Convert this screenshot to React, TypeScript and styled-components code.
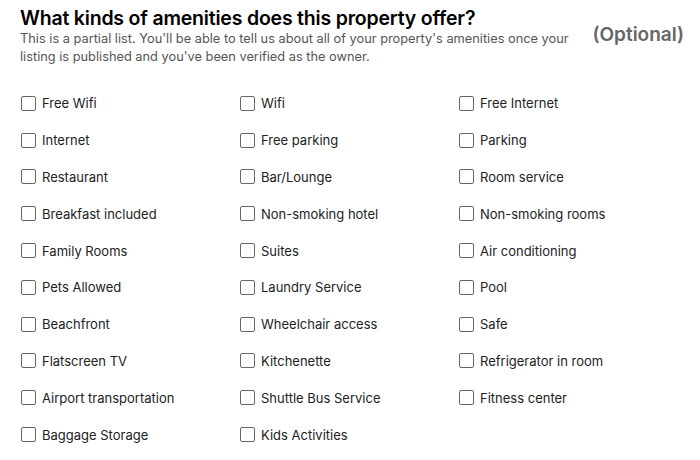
import { createGlobalStyle, styled } from 'styled-components';

const AMENITIES = [
  'Free Wifi',
  'Wifi',
  'Free Internet',
  'Internet',
  'Free parking',
  'Parking',
  'Restaurant',
  'Bar/Lounge',
  'Room service',
  'Breakfast included',
  'Non-smoking hotel',
  'Non-smoking rooms',
  'Family Rooms',
  'Suites',
  'Air conditioning',
  'Pets Allowed',
  'Laundry Service',
  'Pool',
  'Beachfront',
  'Wheelchair access',
  'Safe',
  'Flatscreen TV',
  'Kitchenette',
  'Refrigerator in room',
  'Airport transportation',
  'Shuttle Bus Service',
  'Fitness center',
  'Baggage Storage',
  'Kids Activities',
];

const App = () => {
  return (
    <>
      <GlobalStyle />
      <Wrapper>
        <Header>
          <HeaderText>
            <Title>What kinds of amenities does this property offer?</Title>
            <Description>
              This is a partial list. You'll be able to tell us about all of
              your property's amenities once your listing is published and
              you've been verified as the owner.
            </Description>
          </HeaderText>
          <Optional>(Optional)</Optional>
        </Header>
        <Grid>
          {AMENITIES.map((name) => (
            <Option key={name}>
              <Box type="checkbox" />
              <span>{name}</span>
            </Option>
          ))}
        </Grid>
      </Wrapper>
    </>
  );
};

export default App;

const GlobalStyle = createGlobalStyle`
  body {
    margin: 0;
    background: #fff;
    font-family: Inter, 'Noto Sans', sans-serif;
    color: #000;
  }
`;

const Wrapper = styled.section`
  width: 700px;
  padding: 6px 0 0 20px;
  box-sizing: border-box;
`;

const Header = styled.header`
  display: flex;
  align-items: flex-start;
  justify-content: space-between;
  padding-right: 16px;
`;

const HeaderText = styled.div`
  width: 564px;
`;

const Title = styled.h2`
  margin: 0;
  font-size: 19.5px;
  font-weight: 600;
  line-height: 24px;
  letter-spacing: -0.01em;
`;

const Description = styled.p`
  margin: 0;
  font-size: 12.8px;
  line-height: 18px;
  color: #555;
`;

const Optional = styled.span`
  margin-top: 17px;
  font-size: 19px;
  font-weight: 600;
  color: #666;
`;

const Grid = styled.div`
  display: grid;
  grid-template-columns: repeat(3, 219px);
  grid-auto-rows: 36.8px;
  margin-top: 19px;
`;

const Option = styled.label`
  display: flex;
  align-items: center;
  gap: 6px;
  font-size: 13px;
  color: #222;
  cursor: pointer;
`;

const Box = styled.input`
  appearance: none;
  width: 15px;
  height: 15px;
  margin: 0 0 0 1px;
  border: 1.5px solid #666;
  border-radius: 2px;
  background: #fff;
`;
